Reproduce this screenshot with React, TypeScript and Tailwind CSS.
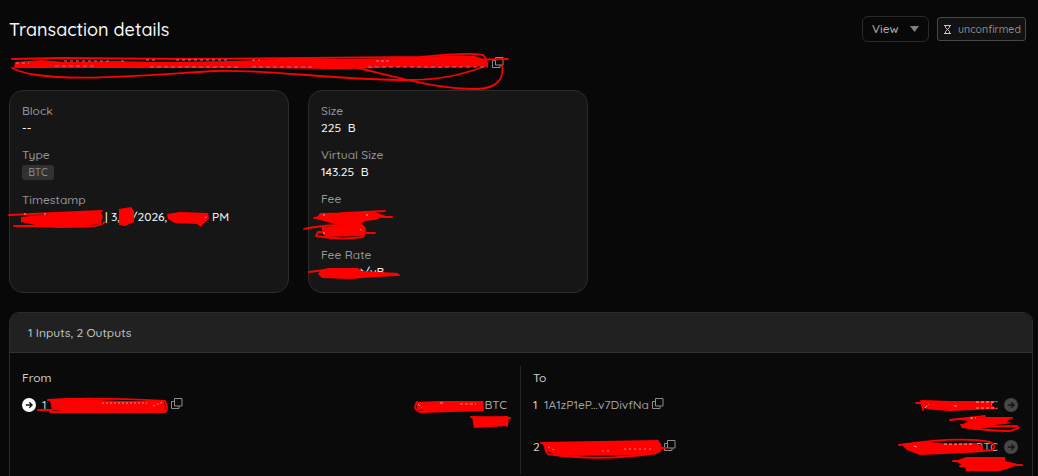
import React from 'react';

function CopyIcon() {
    return (
        <svg width="12" height="12" viewBox="0 0 12 12" fill="none" stroke="#8c8c8c" className="shrink-0">
            <path d="M3.5 0.5h7.5v7.5h-7.5z" />
            <path d="M3.5 3.5h-3v7h7.5v-2.5" />
        </svg>
    );
}

function ArrowIcon({ circle, arrow }: { circle: string; arrow: string }) {
    return (
        <svg width="14" height="14" viewBox="0 0 14 14" fill="none" className="shrink-0">
            <circle cx="7" cy="7" r="7" fill={circle} />
            <path d="M3.8 7h6.2M7.3 4.2L10.1 7l-2.8 2.8" stroke={arrow} strokeWidth="1.3" />
        </svg>
    );
}

function Field({ label, children }: { label: string; children?: React.ReactNode }) {
    return (
        <div>
            <div className="h-[17px] leading-[17px] text-[#979797]">{label}</div>
            {children}
        </div>
    );
}

const card = 'w-[280px] h-[203px] rounded-[14px] border border-[#2c2c2c] bg-[#161616] px-3 pt-[11px] flex flex-col gap-[10px]';
const value = 'h-[17px] leading-[17px] text-[#f8f8f8] whitespace-pre';

// Marker strokes hiding the private values
const blobs = [
    'M15 62L42 60L65 62L115 61L160 62L230 61L300 58L340 59L400 58L440 56L475 56L486 60L487 66L470 67L430 68L400 67L350 69L330 69L250 68L60 68L14 68Z',
    'M21 217L40 215L70 212L100 211L103 216L101 224L80 226L62 228L40 226L21 222Z',
    'M119 209L131 207L134 211L134 222L125 226L119 225Z',
    'M167 214L180 212L208 213L209 219L203 224L201 227L197 224L175 223L168 219Z',
    'M320 213L375 212L386 216L375 220L365 221L361 224L335 224L316 219Z',
    'M322 227L362 224L366 228L364 236L325 237L322 232Z',
    'M321 270L328 268L358 268L362 271L398 273L398 276L375 277L350 279L322 278L318 274Z',
    'M50 400L80 399L120 401L164 401L166 411L130 412L70 412L52 410Z',
    'M416 402L440 401L483 401L484 409L470 411L430 412L417 410Z',
    'M472 417L508 416L507 426L474 428Z',
    'M922 400L950 401L997 401L990 404L997 409L950 411L935 410L922 408Z',
    'M953 419L985 417L1011 417L1007 422L1013 423L995 425L975 430L961 426L968 421Z',
    'M901 444L930 442L950 444L975 443L983 446L983 451L965 453L920 455L907 450Z',
    'M966 457L1005 457L1005 461L1018 464L1010 468L1000 471L966 471L965 467L955 461Z',
    'M542 443L570 442L640 442L659 441L661 452L640 455L560 456L546 451Z',
];

const lines = [
    'M12 59L60 58L190 59L420 57Q470 52 483 55Q488 60 487 67',
    'M12 68Q18 71 30 74C75 82 150 75 215 71C270 69 330 80 410 80Q450 80 485 66',
    'M350 66C400 78 435 89 478 89Q506 87 502 65',
    'M420 61L508 59',
    'M9 215L102 211M14 226L38 226Q104 229 104 222',
    'M314 218L345 213L385 211M360 217L392 217',
    'M304 229Q320 225 360 224Q368 229 363 237Q340 240 316 236L318 232L375 233',
    'M309 272L325 270M350 275L399 275',
    'M38 410L52 410M48 400Q90 397 165 401Q169 409 165 412L50 412',
    'M417 402Q412 409 420 412Q450 411 483 410M471 417L510 418M508 418L507 426',
    'M916 403L924 403M921 401L923 410',
    'M950 420L985 416M961 425L985 423L1012 418M962 427Q990 431 1010 431Q1024 427 1015 426Q990 426 975 428',
    'M899 445Q960 436 990 442Q998 446 992 450L970 452',
    'M953 461L975 461M960 466L1022 465',
    'M541 443L658 441Q664 448 657 453Q600 462 548 454Q543 449 547 444M658 448L666 448',
];

// Specks of the covered text that show through the marker
const specks = [
    { d: 'M16 63h13M64 61h48M121 61h6M146 60h12M176 60h54M252 60h8', stroke: '#a88ab0', dash: '3 3' },
    { d: 'M55 66h40M150 67h90M252 67h60M368 67h118', stroke: '#b0708a', dash: '4 3' },
    { d: 'M376 61h14', stroke: '#9a90c8', dash: '3 2' },
    { d: 'M24 214h2M44 214h3M205 218l2 -2', stroke: '#ff9a9a', dash: '2 1' },
    { d: 'M323 215h3M366 215h3M323 233h2M360 229l2 2', stroke: '#ffb0b0', dash: '2 1' },
    { d: 'M102 403h45M153 406l10 -4', stroke: '#ff8a8a', dash: '2 2' },
    { d: 'M418 404l4 4M440 403h3M460 404h16', stroke: '#ff8a8a', dash: '3 2' },
    { d: 'M925 408l4 -4M954 406h3M976 402h20M976 408h20M970 418h6M914 446l3 1M944 444h30', stroke: '#ffa0a0', dash: '3 2' },
    { d: 'M548 447l6 3M602 451h10M624 449h28', stroke: '#ff8a8a', dash: '2 3' },
];

function Scribbles() {
    return (
        <svg width="1038" height="476" viewBox="0 0 1038 476" fill="none" className="absolute top-0 left-0 pointer-events-none">
            <g fill="#fe0000">
                {blobs.map((d) => (
                    <path key={d} d={d} />
                ))}
            </g>
            <g stroke="#fe0000" strokeWidth="1.8" strokeLinecap="round" strokeLinejoin="round">
                {lines.map((d) => (
                    <path key={d} d={d} />
                ))}
            </g>
            {specks.map((s) => (
                <path key={s.d} d={s.d} stroke={s.stroke} strokeDasharray={s.dash} />
            ))}
        </svg>
    );
}

export default function App() {
    return (
        <div className="relative w-[1038px] h-[476px] overflow-hidden bg-[#080808] font-['Quicksand','Lato',sans-serif] font-medium text-[12px] text-[#d0d0d0]">

            {/* Title bar */}
            <div className="flex items-start justify-between pl-[9px] pr-3 pt-4">
                <h1 className="text-[18px] leading-7 text-[#f8f8f8]">Transaction details</h1>
                <div className="flex gap-2">
                    <button className="flex items-center justify-between w-[67px] h-[26px] pl-[9px] pr-[9px] rounded-md border border-[#2a2a2a] text-[#b0b0b0]">
                        View
                        <svg width="9" height="6" viewBox="0 0 9 6" fill="#808080">
                            <path d="M0 0h9L4.5 6z" />
                        </svg>
                    </button>
                    <div className="mt-px flex items-center gap-[7px] w-[89px] h-6 pl-[6px] rounded-[3px] border border-[#484848] bg-[#121212] text-[10.5px] text-[#8f8f8f]">
                        <svg width="7" height="9" viewBox="0 0 7 9" fill="none" stroke="#c8c8c8" className="shrink-0">
                            <path d="M0 .5h7M0 8.5h7M1.5 .5v2l4 4v2M5.5 .5v2l-4 4v2" />
                        </svg>
                        <span className="pt-px">unconfirmed</span>
                    </div>
                </div>
            </div>

            {/* Transaction id */}
            <div className="flex h-[46px] pl-[492px] pt-[13px]">
                <CopyIcon />
            </div>

            {/* Summary cards */}
            <div className="flex gap-[19px] pl-[9px]">
                <div className={card}>
                    <Field label="Block">
                        <div className={value}>--</div>
                    </Field>
                    <Field label="Type">
                        <div className="mt-[2px] mb-px w-8 h-[15px] leading-[15px] rounded-[3px] bg-[#303232] text-center text-[10.5px] text-[#8b8b8b]">BTC</div>
                    </Field>
                    <Field label="Timestamp">
                        <div className="flex h-[17px] leading-[17px] pl-[83px] text-[#f8f8f8]">
                            <span className="w-[26px]">| 3,</span>
                            <span className="w-[81px]">/2026,</span>
                            <span>PM</span>
                        </div>
                    </Field>
                </div>
                <div className={card}>
                    <Field label="Size">
                        <div className={value}>225  B</div>
                    </Field>
                    <Field label="Virtual Size">
                        <div className={value}>143.25  B</div>
                    </Field>
                    <Field label="Fee">
                        <div className="h-[29px]" />
                    </Field>
                    <Field label="Fee Rate">
                        <div className={`${value} pl-[25px]`}>sat/vB</div>
                    </Field>
                </div>
            </div>

            {/* Inputs and outputs */}
            <div className="mt-[19px] ml-[9px] w-[1024px] h-[180px] rounded-t-[10px] border border-[#2c2c2c] bg-[#0a0a0a]">
                <div className="h-10 leading-10 pl-[18px] rounded-t-[9px] border-b border-[#323232] bg-[#212121] text-[#c4c4c4]">
                    1 Inputs, 2 Outputs
                </div>
                <div className="flex pt-[13px]">
                    <div className="w-[511px] h-[108px] pl-3 pr-[13px] pt-1 border-r border-[#262626]">
                        <div className="leading-4">From</div>
                        <div className="mt-[11px] flex items-center h-4">
                            <ArrowIcon circle="#fff" arrow="#111" />
                            <span className="ml-[6px] w-[129px]">1</span>
                            <div className="pb-[2px]"><CopyIcon /></div>
                            <span className="ml-auto text-[#a8a8a8]">BTC</span>
                        </div>
                    </div>
                    <div className="flex-1 pl-3 pr-[14px] pt-1">
                        <div className="leading-4">To</div>
                        <div className="mt-[11px] flex items-center h-4">
                            <span className="w-[11px]">1</span>
                            <span className="w-[108px] whitespace-nowrap tracking-[-0.05px] text-[#a0a0a0]">1A1zP1eP...v7DivfNa</span>
                            <div className="pb-[2px]"><CopyIcon /></div>
                            <span className="ml-auto mr-[6px] text-[#a8a8a8]">BTC</span>
                            <ArrowIcon circle="#464646" arrow="#151515" />
                        </div>
                        <div className="mt-[26px] flex items-center h-4">
                            <span className="w-[131px]">2</span>
                            <div className="pb-[2px]"><CopyIcon /></div>
                            <span className="ml-auto mr-[6px] text-[#a8a8a8]">BTC</span>
                            <ArrowIcon circle="#464646" arrow="#151515" />
                        </div>
                    </div>
                </div>
            </div>

            <Scribbles />
        </div>
    );
}
